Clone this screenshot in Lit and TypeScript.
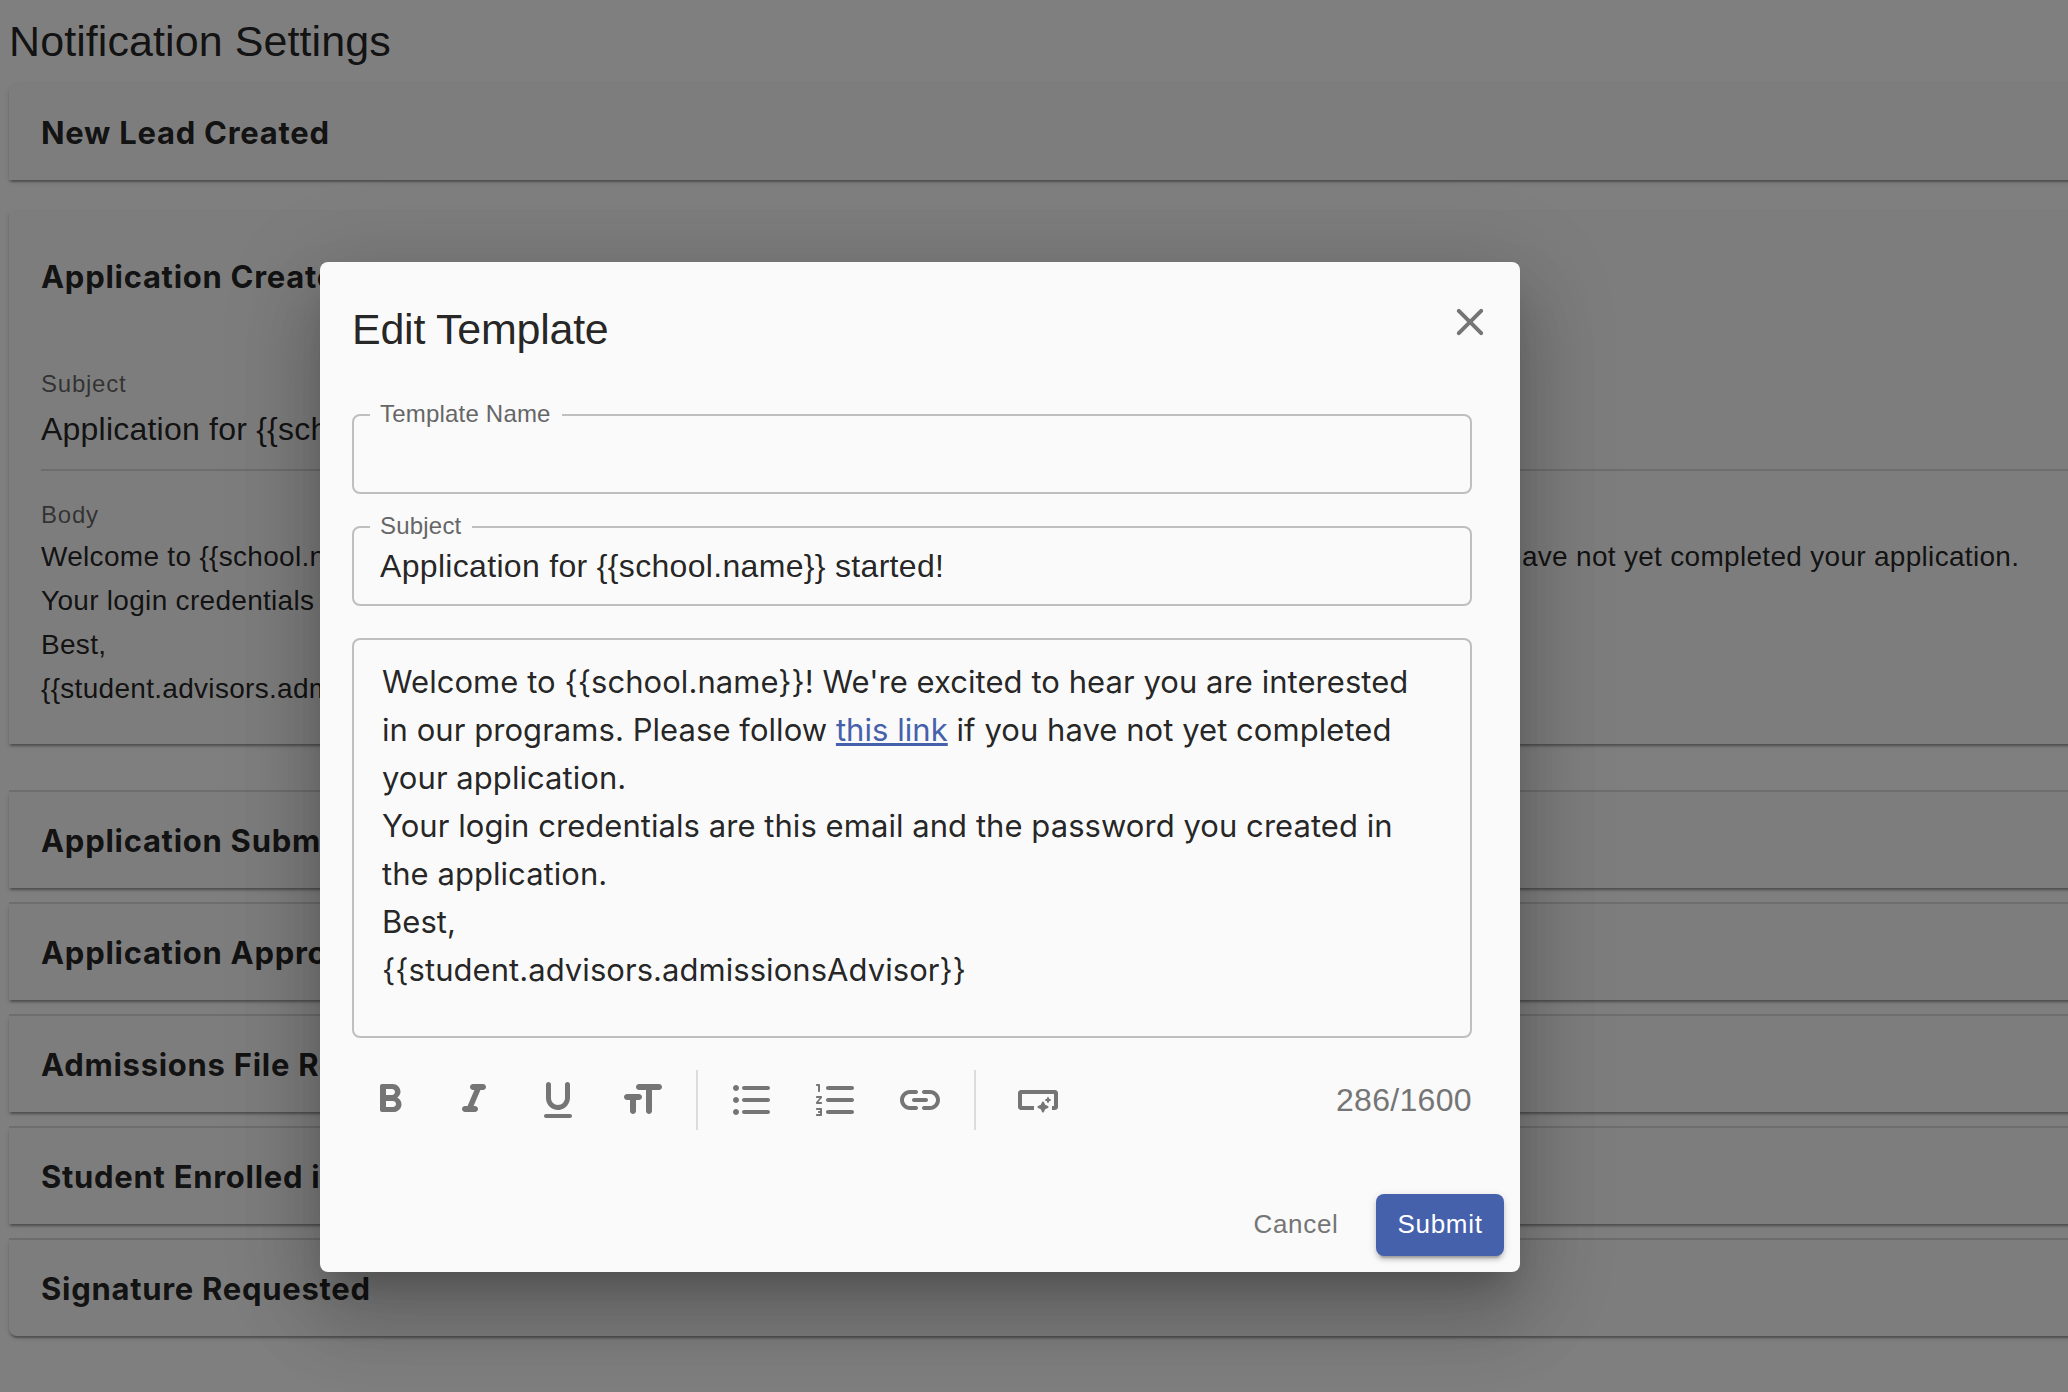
import { LitElement, html, css, svg } from "lit";
import { customElement } from "lit/decorators.js";

const ICONS: Record<string, string> = {
  close: "M18.3 5.71c-.39-.39-1.02-.39-1.41 0L12 10.59 7.11 5.7c-.39-.39-1.02-.39-1.41 0-.39.39-.39 1.02 0 1.41L10.59 12 5.7 16.89c-.39.39-.39 1.02 0 1.41.39.39 1.02.39 1.41 0L12 13.41l4.89 4.89c.39.39 1.02.39 1.41 0 .39-.39.39-1.02 0-1.41L13.41 12l4.89-4.89c.38-.38.38-1.02 0-1.4z",
  bold: "M15.6 10.79c.97-.67 1.65-1.77 1.65-2.79 0-2.26-1.75-4-4-4H8c-.55 0-1 .45-1 1v12c0 .55.45 1 1 1h5.78c2.07 0 3.96-1.69 3.97-3.77.01-1.53-.85-2.84-2.15-3.44zM10 6.5h3c.83 0 1.5.67 1.5 1.5s-.67 1.5-1.5 1.5h-3v-3zm3.5 9H10v-3h3.5c.83 0 1.5.67 1.5 1.5s-.67 1.5-1.5 1.5z",
  italic: "M10 5.5c0 .83.67 1.5 1.5 1.5h.71l-3.42 8H7.5c-.83 0-1.5.67-1.5 1.5S6.67 18 7.5 18h5c.83 0 1.5-.67 1.5-1.5s-.67-1.5-1.5-1.5h-.71l3.42-8h1.29c.83 0 1.5-.67 1.5-1.5S17.33 4 16.5 4h-5c-.83 0-1.5.67-1.5 1.5z",
  underline: "M12.79 16.95c3.03-.39 5.21-3.11 5.21-6.16V4.25C18 3.56 17.44 3 16.75 3s-1.25.56-1.25 1.25v6.65c0 1.67-1.13 3.19-2.77 3.52-2.25.47-4.23-1.25-4.23-3.42V4.25C8.5 3.56 7.94 3 7.25 3S6 3.56 6 4.25V11c0 3.57 3.13 6.42 6.79 5.95zM5 20c0 .55.45 1 1 1h12c.55 0 1-.45 1-1s-.45-1-1-1H6c-.55 0-1 .45-1 1z",
  size: "M9 5.5c0 .83.67 1.5 1.5 1.5H14v10.5c0 .83.67 1.5 1.5 1.5s1.5-.67 1.5-1.5V7h3.5c.83 0 1.5-.67 1.5-1.5S21.33 4 20.5 4h-10C9.67 4 9 4.67 9 5.5zM4.5 12H6v5.5c0 .83.67 1.5 1.5 1.5S9 18.33 9 17.5V12h1.5c.83 0 1.5-.67 1.5-1.5S11.33 9 10.5 9h-6C3.67 9 3 9.67 3 10.5S3.67 12 4.5 12z",
  bullets: "M4 10.5c-.83 0-1.5.67-1.5 1.5s.67 1.5 1.5 1.5 1.5-.67 1.5-1.5-.67-1.5-1.5-1.5zm0-6c-.83 0-1.5.67-1.5 1.5S3.17 7.5 4 7.5 5.5 6.83 5.5 6 4.83 4.5 4 4.5zm0 12c-.83 0-1.5.68-1.5 1.5s.68 1.5 1.5 1.5 1.5-.68 1.5-1.5-.67-1.5-1.5-1.5zM8 19h12c.55 0 1-.45 1-1s-.45-1-1-1H8c-.55 0-1 .45-1 1s.45 1 1 1zm0-6h12c.55 0 1-.45 1-1s-.45-1-1-1H8c-.55 0-1 .45-1 1s.45 1 1 1zM7 6c0 .55.45 1 1 1h12c.55 0 1-.45 1-1s-.45-1-1-1H8c-.55 0-1 .45-1 1z",
  numbers: "M8 7h12c.55 0 1-.45 1-1s-.45-1-1-1H8c-.55 0-1 .45-1 1s.45 1 1 1zm12 10H8c-.55 0-1 .45-1 1s.45 1 1 1h12c.55 0 1-.45 1-1s-.45-1-1-1zm0-6H8c-.55 0-1 .45-1 1s.45 1 1 1h12c.55 0 1-.45 1-1s-.45-1-1-1zM4.5 16h-2c-.28 0-.5.22-.5.5s.22.5.5.5H4v.5h-.5c-.28 0-.5.22-.5.5s.22.5.5.5H4v.5H2.5c-.28 0-.5.22-.5.5s.22.5.5.5h2c.28 0 .5-.22.5-.5v-3c0-.28-.22-.5-.5-.5zm-2-11H3v2.5c0 .28.22.5.5.5s.5-.22.5-.5v-3c0-.28-.22-.5-.5-.5h-1c-.28 0-.5.22-.5.5s.22.5.5.5zm2 5h-2c-.28 0-.5.22-.5.5s.22.5.5.5h1.3l-1.68 1.96c-.08.09-.12.21-.12.32v.22c0 .28.22.5.5.5h2c.28 0 .5-.22.5-.5s-.22-.5-.5-.5H3.2l1.68-1.96c.08-.09.12-.21.12-.32v-.22c0-.28-.22-.5-.5-.5z",
  link: "M17 7h-3c-.55 0-1 .45-1 1s.45 1 1 1h3c1.65 0 3 1.35 3 3s-1.35 3-3 3h-3c-.55 0-1 .45-1 1s.45 1 1 1h3c2.76 0 5-2.24 5-5s-2.24-5-5-5zm-9 5c0 .55.45 1 1 1h6c.55 0 1-.45 1-1s-.45-1-1-1H9c-.55 0-1 .45-1 1zm2 3H7c-1.65 0-3-1.35-3-3s1.35-3 3-3h3c.55 0 1-.45 1-1s-.45-1-1-1H7c-2.76 0-5 2.24-5 5s2.24 5 5 5h3c.55 0 1-.45 1-1s-.45-1-1-1z",
  smart: "M22 8.5v7c0 .83-.67 1.5-1.5 1.5H19v-2h1V9H4v6h6v2H3.5c-.83 0-1.5-.67-1.5-1.5v-7C2 7.67 2.67 7 3.5 7h17c.83 0 1.5.67 1.5 1.5zM14.04 17.99c.18.39.73.39.91 0l.63-1.4 1.4-.63c.39-.18.39-.73 0-.91l-1.4-.63-.63-1.4c-.18-.39-.73-.39-.91 0l-.63 1.4-1.4.63c-.39.18-.39.73 0 .91l1.4.63.63 1.4zM16.74 13.43c.1.22.42.22.52 0l.36-.8.8-.36c.22-.1.22-.42 0-.52l-.8-.36-.36-.8c-.1-.22-.42-.22-.52 0l-.36.8-.8.36c-.22.1-.22.42 0 .52l.8.36.36.8z",
};

const icon = (name: string) => html`<svg class="icon" viewBox="0 0 24 24" aria-hidden="true">${svg`<path d=${ICONS[name]}></path>`}</svg>`;

const LATER_EVENTS = [
  "Application Submitted",
  "Application Approved",
  "Admissions File Reviewed",
  "Student Enrolled in Program",
  "Signature Requested",
];

@customElement("app-root")
export class AppRoot extends LitElement {
  static styles = css`
    :host {
      display: block;
      position: relative;
      width: 100vw;
      height: 100vh;
      overflow: hidden;
      background: #fff;
      color: rgba(0, 0, 0, 0.87);
      font-family: "Liberation Sans", Arial, sans-serif;
    }
    * { box-sizing: border-box; }

    .page {
      display: flex;
      flex-direction: column;
      width: 2140px;
      padding-left: 9px;
    }
    .page-title {
      margin: 0;
      height: 84px;
      font-size: 43px;
      font-weight: 400;
      line-height: 82px;
      letter-spacing: 0.08px;
    }
    .card {
      position: relative;
      padding: 0 32px;
      background: #fafafa;
      box-shadow: 0 4px 2px -2px rgba(0, 0, 0, 0.2), 0 2px 2px rgba(0, 0, 0, 0.14), 0 2px 6px rgba(0, 0, 0, 0.12);
    }
    .card.first { border-radius: 8px 8px 0 0; }
    .card.expanded { height: 532px; margin: 32px 0 48px; }
    .card.last { border-radius: 0 0 8px 8px; }
    .later { display: flex; flex-direction: column; gap: 16px; }
    .later .card::before {
      content: "";
      position: absolute;
      left: 0;
      right: 0;
      top: -2px;
      height: 2px;
      background: rgba(0, 0, 0, 0.12);
    }
    .card-title {
      margin: 0;
      padding-top: 1px;
      height: 96px;
      font: 700 31px/96px Inter, sans-serif;
      letter-spacing: 0.72px;
    }
    .expanded .card-title { height: 128px; line-height: 128px; padding-top: 1px; }
    .caption {
      height: 40px;
      font-size: 24px;
      line-height: 40px;
      letter-spacing: 0.77px;
      color: rgba(0, 0, 0, 0.6);
    }
    .expanded .subject-caption { margin-top: 24px; }
    .subject-value {
      height: 67px;
      padding-top: 3px;
      font-size: 32px;
      line-height: 44px;
      letter-spacing: 0.22px;
      border-bottom: 2px solid rgba(0, 0, 0, 0.12);
      margin-bottom: 24px;
    }
    .body-text {
      font-size: 28px;
      line-height: 44px;
      letter-spacing: 0.3px;
      white-space: nowrap;
    }
    .body-text p { margin: 0; }

    .backdrop {
      position: absolute;
      inset: 0;
      display: flex;
      align-items: flex-start;
      padding: 262px 0 0 320px;
      background: rgba(0, 0, 0, 0.5);
    }
    .dialog {
      display: flex;
      flex-direction: column;
      width: 1200px;
      height: 1010px;
      border-radius: 8px;
      background: #fafafa;
      box-shadow: 0 22px 30px -14px rgba(0, 0, 0, 0.2), 0 48px 76px 6px rgba(0, 0, 0, 0.14), 0 18px 92px 16px rgba(0, 0, 0, 0.12);
    }
    .dialog-head {
      display: flex;
      justify-content: space-between;
      align-items: flex-start;
      height: 152px;
      padding: 32px 26px 0 32px;
    }
    .dialog-title {
      margin: 0;
      font-size: 43px;
      font-weight: 400;
      line-height: 70px;
      letter-spacing: -0.25px;
    }
    .icon { display: block; width: 48px; height: 48px; fill: #757575; }
    button {
      display: flex;
      align-items: center;
      justify-content: center;
      border: 0;
      margin: 0;
      padding: 0;
      background: none;
      font: inherit;
    }
    .close { width: 48px; height: 48px; margin-top: 4px; }

    .form { display: flex; flex-direction: column; gap: 32px; width: 1120px; margin-left: 32px; }
    .field {
      position: relative;
      height: 80px;
      border: 2px solid #bfbfbf;
      border-radius: 8px;
      padding: 0 26px;
      font-size: 32px;
      line-height: 76px;
      letter-spacing: 0.32px;
      white-space: nowrap;
    }
    .field-label {
      position: absolute;
      left: 16px;
      top: -14px;
      padding: 0 11px 0 10px;
      background: #fafafa;
      color: #666;
      font-size: 24px;
      line-height: 24px;
      letter-spacing: 0.2px;
    }
    .editor {
      height: 400px;
      padding: 18px 28px;
      border: 2px solid #bfbfbf;
      border-radius: 8px;
      font: 400 31px/48px Inter, sans-serif;
      letter-spacing: 0.05px;
      white-space: nowrap;
    }
    .editor p { margin: 0; }
    .editor a {
      color: #4561ab;
      text-decoration: underline;
      text-decoration-thickness: 3px;
      text-underline-offset: 2px;
    }

    .toolbar {
      display: flex;
      align-items: center;
      width: 1124px;
      height: 84px;
      margin: 20px 0 0 28px;
    }
    .tool { width: 84px; height: 84px; }
    .tool.spaced { margin-left: 8px; }
    .rule { width: 2px; height: 60px; margin: 0 12px; background: #dcdcdc; }
    .count { margin-left: auto; font-size: 32px; line-height: 44px; letter-spacing: 0.33px; color: #757575; }

    .actions {
      display: flex;
      justify-content: flex-end;
      gap: 15px;
      margin: 52px 16px 0 0;
    }
    .action {
      height: 62px;
      padding-bottom: 1px;
      border-radius: 8px;
      font-size: 26px;
      letter-spacing: 0.7px;
    }
    .cancel { width: 130px; color: #757575; }
    .submit {
      width: 128px;
      background: #4561ab;
      color: #fff;
      box-shadow: 0 6px 2px -4px rgba(0, 0, 0, 0.2), 0 4px 4px rgba(0, 0, 0, 0.14), 0 2px 10px rgba(0, 0, 0, 0.12);
    }
  `;

  private page() {
    return html`
      <main class="page">
        <h1 class="page-title">Notification Settings</h1>
        <section class="card first"><h2 class="card-title">New Lead Created</h2></section>
        <section class="card expanded">
          <h2 class="card-title">Application Created</h2>
          <div class="caption subject-caption">Subject</div>
          <div class="subject-value">Application for {{school.name}} started!</div>
          <div class="caption">Body</div>
          <div class="body-text">
            <p>Welcome to {{school.name}}! We're excited to hear you are interested in our programs. Please follow this link if you have not yet completed your application.</p>
            <p>Your login credentials are this email and the password you created in the application.</p>
            <p>Best,</p>
            <p>{{student.advisors.admissionsAdvisor}}</p>
          </div>
        </section>
        <div class="later">
          ${LATER_EVENTS.map((name, i) => html`
            <section class="card ${i === LATER_EVENTS.length - 1 ? "last" : ""}"><h2 class="card-title">${name}</h2></section>
          `)}
        </div>
      </main>
    `;
  }

  render() {
    return html`
      ${this.page()}
      <div class="backdrop">
        <div class="dialog" role="dialog">
          <header class="dialog-head">
            <h2 class="dialog-title">Edit Template</h2>
            <button class="close">${icon("close")}</button>
          </header>
          <div class="form">
            <div class="field"><span class="field-label">Template Name</span></div>
            <div class="field"><span class="field-label">Subject</span>Application for {{school.name}} started!</div>
            <div class="editor">
              <p>Welcome to {{school.name}}! We're excited to hear you are interested<br />in our programs. Please follow <a>this link</a> if you have not yet completed<br />your application.</p>
              <p>Your login credentials are this email and the password you created in<br />the application.</p>
              <p>Best,</p>
              <p>{{student.advisors.admissionsAdvisor}}</p>
            </div>
          </div>
          <div class="toolbar">
            ${["bold", "italic", "underline", "size"].map((n) => html`<button class="tool">${icon(n)}</button>`)}
            <span class="rule"></span>
            ${["bullets", "numbers", "link"].map((n) => html`<button class="tool">${icon(n)}</button>`)}
            <span class="rule"></span>
            <button class="tool spaced">${icon("smart")}</button>
            <span class="count">286/1600</span>
          </div>
          <footer class="actions">
            <button class="action cancel">Cancel</button>
            <button class="action submit">Submit</button>
          </footer>
        </div>
      </div>
    `;
  }
}
